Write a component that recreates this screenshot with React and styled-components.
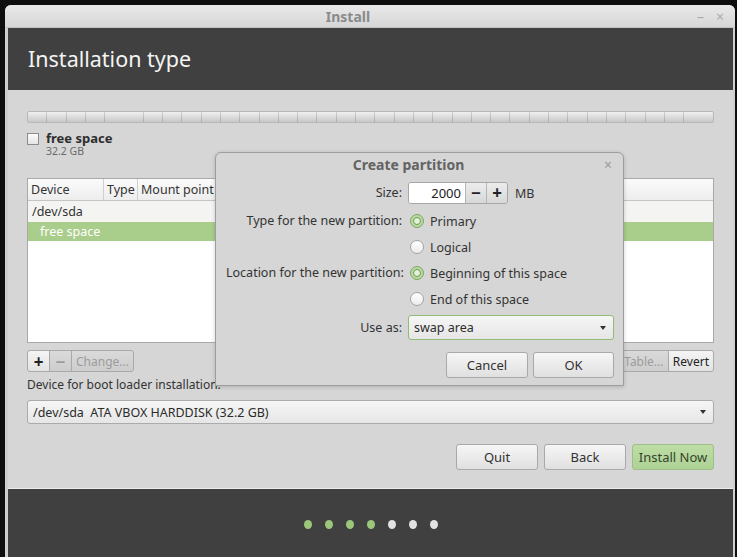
import React from 'react'
import styled, { createGlobalStyle } from 'styled-components'

const GlobalStyle = createGlobalStyle`
  html, body {
    margin: 0;
    padding: 0;
    background: #0e0e0e;
    font-family: "Noto Sans", "DejaVu Sans", sans-serif;
    overflow: hidden;
  }
`

const Window = styled.div`
  margin: 5px 2px 0 5px;
  height: 552px;
  background: #cfcfcf;
  border-radius: 6px 6px 0 0;
  display: flex;
  flex-direction: column;
  padding: 0 2px 0 3px;
`

const TitleBar = styled.div`
  height: 22px;
  flex: none;
  display: flex;
  align-items: center;
  justify-content: center;
  position: relative;
  background: linear-gradient(#e9e9e9, #d6d6d6);
  border-radius: 6px 6px 0 0;
  margin: 0 -2px 0 -3px;
  padding-right: 44px;
  font-size: 14px;
  font-weight: bold;
  color: #8a8a8a;
  border-bottom: 1px solid #c2c2c2;
`

const TitleControls = styled.div`
  position: absolute;
  right: 11px;
  top: 0;
  height: 22px;
  display: flex;
  align-items: center;
  gap: 12px;
  color: #ababab;
  font-size: 14px;
  font-weight: normal;
`

const Header = styled.div`
  height: 62px;
  flex: none;
  background: #404040;
  color: #f4f4f4;
  font-size: 21.5px;
  line-height: 30px;
  padding: 16px 0 0 20px;
  box-sizing: border-box;
`

const Content = styled.div`
  position: relative;
  height: 399px;
  flex: none;
  background: #d6d6d6;
  padding: 21px 19px 0 19px;
  box-sizing: border-box;
  display: flex;
  flex-direction: column;
  font-size: 12.5px;
  color: #333;
  border-bottom: 1px solid #ececec;
`

const PartBar = styled.div`
  height: 10px;
  border: 1px solid #b8b8b8;
  border-radius: 2px;
  background:
    repeating-linear-gradient(90deg, transparent 0 18.3px, rgba(0, 0, 0, 0.14) 18.3px 19.3px),
    linear-gradient(#f0f0f0, #dadada 55%, #c8c8c8);
`

const Legend = styled.div`
  display: flex;
  gap: 7px;
  margin-top: 8px;
  height: 27px;
`

const CheckBox = styled.span`
  width: 10px;
  height: 10px;
  margin-top: 2px;
  border: 1px solid #8c8c8c;
  background: linear-gradient(#fbfbfb, #e4e4e4);
`

const LegendText = styled.div`
  display: flex;
  flex-direction: column;
`

const LegendName = styled.span`
  font-size: 13px;
  font-weight: bold;
  line-height: 14px;
  color: #2e2e2e;
`

const LegendSize = styled.span`
  font-size: 10.5px;
  line-height: 13px;
  color: #6a6a6a;
`

const Table = styled.div`
  margin-top: 20px;
  height: 165px;
  box-sizing: border-box;
  border: 1px solid #a9a9a9;
  background: #ffffff;
  display: flex;
  flex-direction: column;
`

const HeadRow = styled.div`
  display: flex;
  height: 21px;
  background: linear-gradient(#fbfbfb, #ededed);
  border-bottom: 1px solid #c4c4c4;
`

const HeadCell = styled.div`
  width: ${p => (p.$w ? `${p.$w}px` : 'auto')};
  flex: ${p => (p.$w ? 'none' : '1')};
  padding-left: 3px;
  line-height: 21px;
  box-sizing: border-box;
  border-right: ${p => (p.$w ? '1px solid #cfcfcf' : 'none')};
  white-space: nowrap;
  overflow: hidden;
`

const Row = styled.div`
  height: ${p => (p.$selected ? '19px' : '21px')};
  line-height: ${p => (p.$selected ? '19px' : '21px')};
  padding-left: ${p => (p.$indent ? '12px' : '4px')};
  background: ${p => (p.$selected ? '#a9cd8b' : '#f4f4f2')};
  color: ${p => (p.$selected ? '#ffffff' : '#333')};
`

const ButtonRow = styled.div`
  display: flex;
  justify-content: space-between;
  margin-top: 7px;
  height: 22px;
`

const Group = styled.div`
  display: flex;
`

const SmallButton = styled.div`
  height: 22px;
  box-sizing: border-box;
  padding: 0 ${p => (p.$icon ? '0' : '4px')};
  width: ${p => (p.$w ? `${p.$w}px` : 'auto')};
  display: flex;
  align-items: center;
  justify-content: center;
  border: 1px solid #a9a9a9;
  margin-left: -1px;
  background: ${p => (p.$disabled ? 'linear-gradient(#dadada, #cdcdcd)' : 'linear-gradient(#f5f5f5, #e2e2e2)')};
  color: ${p => (p.$disabled ? '#9c9c9c' : '#222')};
  font-size: ${p => (p.$icon ? '17px' : '12px')};
  font-weight: ${p => (p.$icon ? 'bold' : 'normal')};
  white-space: nowrap;
  &:first-child {
    margin-left: 0;
    border-radius: 3px 0 0 3px;
  }
  &:last-child {
    border-radius: 0 3px 3px 0;
  }
`

const FieldLabel = styled.div`
  margin-top: 6px;
  line-height: 14px;
  font-size: 12px;
`

const Combo = styled.div`
  margin-top: ${p => p.$mt || 0}px;
  height: ${p => p.$h || 24}px;
  box-sizing: border-box;
  border: 1px solid ${p => (p.$focus ? '#93bb73' : '#ababab')};
  border-radius: 3px;
  background: linear-gradient(#f6f6f6, #e6e6e6);
  display: flex;
  align-items: center;
  justify-content: space-between;
  align-self: ${p => (p.$focus ? 'end' : 'stretch')};
  padding: 0 7px 0 5px;
  font-size: 12.5px;
  color: #2c2c2c;
  white-space: pre;
`

const Arrow = styled.span`
  width: 0;
  height: 0;
  border-left: 3.5px solid transparent;
  border-right: 3.5px solid transparent;
  border-top: 4px solid #333;
`

const NavRow = styled.div`
  display: flex;
  justify-content: flex-end;
  gap: 6px;
  margin-top: 20px;
`

const Button = styled.div`
  width: ${p => p.$w || 82}px;
  height: 26px;
  box-sizing: border-box;
  border: 1px solid ${p => (p.$primary ? '#9fbe88' : '#a9a9a9')};
  border-radius: 3px;
  background: ${p => (p.$primary ? 'linear-gradient(#bddda5, #aed195)' : 'linear-gradient(#f6f6f6, #e0e0e0)')};
  color: ${p => (p.$primary ? '#34452a' : '#333')};
  display: flex;
  align-items: center;
  justify-content: center;
  font-size: 13px;
`

const Footer = styled.div`
  flex: 1;
  background: #404040;
  display: flex;
  justify-content: center;
  gap: 13px;
  padding-top: 31px;
  box-sizing: border-box;
`

const Dot = styled.span`
  width: 8px;
  height: 9px;
  border-radius: 50%;
  background: ${p => (p.$done ? '#9cc77b' : '#e2e2e2')};
`

/* dialog lying over the page */
const Dialog = styled.div`
  position: absolute;
  left: 207px;
  top: 62px;
  width: 409px;
  height: 234px;
  box-sizing: border-box;
  background: #d6d6d6;
  border: 1px solid #9d9d9d;
  border-radius: 6px 6px 0 0;
  box-shadow: 0 1px 4px rgba(0, 0, 0, 0.18);
  display: flex;
  flex-direction: column;
`

const DialogTitle = styled.div`
  height: 23px;
  line-height: 23px;
  text-align: center;
  padding-right: 22px;
  font-size: 14px;
  font-weight: bold;
  color: #636363;
  position: relative;
`

const CloseX = styled.span`
  position: absolute;
  right: 11px;
  top: 0;
  font-weight: normal;
  font-size: 14px;
  color: #9a9a9a;
`

const Form = styled.div`
  display: grid;
  grid-template-columns: 176px 206px;
  column-gap: 6px;
  grid-template-rows: 26px repeat(4, 26px) 28px 38px;
  padding: 6px 10px 0 10px;
`

const Label = styled.div`
  text-align: right;
  align-self: ${p => p.$align || 'center'};
  line-height: ${p => p.$lh || 16}px;
  white-space: nowrap;
  color: #333;
`

const Spin = styled.div`
  display: flex;
  align-items: center;
  align-self: start;
  gap: 7px;
`

const SpinBox = styled.div`
  display: flex;
  height: 22px;
  border: 1px solid #a7a7a7;
  border-radius: 3px;
  box-sizing: border-box;
  overflow: hidden;
`

const SpinInput = styled.div`
  width: 56px;
  background: #ffffff;
  text-align: right;
  padding-right: 4px;
  box-sizing: border-box;
  line-height: 20px;
  font-size: 13px;
  color: #222;
`

const SpinButton = styled.div`
  width: 20px;
  border-left: 1px solid #b6b6b6;
  background: linear-gradient(#ececec, #d8d8d8);
  display: flex;
  align-items: center;
  justify-content: center;
  font-size: 17px;
  font-weight: bold;
  color: #222;
  line-height: 20px;
`

const Radio = styled.div`
  display: flex;
  align-items: center;
  gap: 6px;
  padding-left: 2px;
`

const RadioDot = styled.span`
  width: 14px;
  height: 14px;
  box-sizing: border-box;
  border-radius: 50%;
  border: 1px solid ${p => (p.$on ? '#7ea862' : '#a3a3a3')};
  background: ${p => (p.$on ? '#b9d9a2' : 'linear-gradient(#ffffff, #ececec)')};
  display: flex;
  align-items: center;
  justify-content: center;
  &::after {
    content: '';
    display: ${p => (p.$on ? 'block' : 'none')};
    width: 6px;
    height: 6px;
    border-radius: 50%;
    border: 1px solid #6f9a52;
    background: #e4f1da;
  }
`

const DialogButtons = styled.div`
  grid-column: 1 / -1;
  display: flex;
  justify-content: flex-end;
  align-items: flex-end;
  gap: 5px;
`

const columns = [
  { name: 'Device', w: 76 },
  { name: 'Type', w: 34 },
  { name: 'Mount point' },
]

const steps = [true, true, true, true, false, false, false]

export default function App() {
  return (
    <>
      <GlobalStyle />
      <Window>
        <TitleBar>
          Install
          <TitleControls>
            <span>–</span>
            <span>×</span>
          </TitleControls>
        </TitleBar>
        <Header>Installation type</Header>
        <Content>
          <PartBar />
          <Legend>
            <CheckBox />
            <LegendText>
              <LegendName>free space</LegendName>
              <LegendSize>32.2 GB</LegendSize>
            </LegendText>
          </Legend>
          <Table>
            <HeadRow>
              {columns.map(c => (
                <HeadCell key={c.name} $w={c.w}>{c.name}</HeadCell>
              ))}
            </HeadRow>
            <Row>/dev/sda</Row>
            <Row $selected $indent>free space</Row>
          </Table>
          <ButtonRow>
            <Group>
              <SmallButton $icon $w={23}>+</SmallButton>
              <SmallButton $icon $w={23} $disabled>−</SmallButton>
              <SmallButton $disabled>Change...</SmallButton>
            </Group>
            <Group>
              <SmallButton $disabled $w={50}>Table...</SmallButton>
              <SmallButton>Revert</SmallButton>
            </Group>
          </ButtonRow>
          <FieldLabel>Device for boot loader installation:</FieldLabel>
          <Combo $mt={8} $h={24}>
            <span>/dev/sda  ATA VBOX HARDDISK (32.2 GB)</span>
            <Arrow />
          </Combo>
          <NavRow>
            <Button>Quit</Button>
            <Button>Back</Button>
            <Button $primary>Install Now</Button>
          </NavRow>

          <Dialog>
            <DialogTitle>
              Create partition
              <CloseX>×</CloseX>
            </DialogTitle>
            <Form>
              <Label $align="start" $lh={22}>Size:</Label>
              <Spin>
                <SpinBox>
                  <SpinInput>2000</SpinInput>
                  <SpinButton>−</SpinButton>
                  <SpinButton>+</SpinButton>
                </SpinBox>
                <span>MB</span>
              </Spin>

              <Label>Type for the new partition:</Label>
              <Radio><RadioDot $on />Primary</Radio>
              <span />
              <Radio><RadioDot />Logical</Radio>

              <Label>Location for the new partition:</Label>
              <Radio><RadioDot $on />Beginning of this space</Radio>
              <span />
              <Radio><RadioDot />End of this space</Radio>

              <Label $align="end" $lh={24}>Use as:</Label>
              <Combo $h={25} $focus>
                <span>swap area</span>
                <Arrow />
              </Combo>

              <DialogButtons>
                <Button $w={82}>Cancel</Button>
                <Button $w={81}>OK</Button>
              </DialogButtons>
            </Form>
          </Dialog>
        </Content>
        <Footer>
          {steps.map((done, i) => (
            <Dot key={i} $done={done} />
          ))}
        </Footer>
      </Window>
    </>
  )
}
